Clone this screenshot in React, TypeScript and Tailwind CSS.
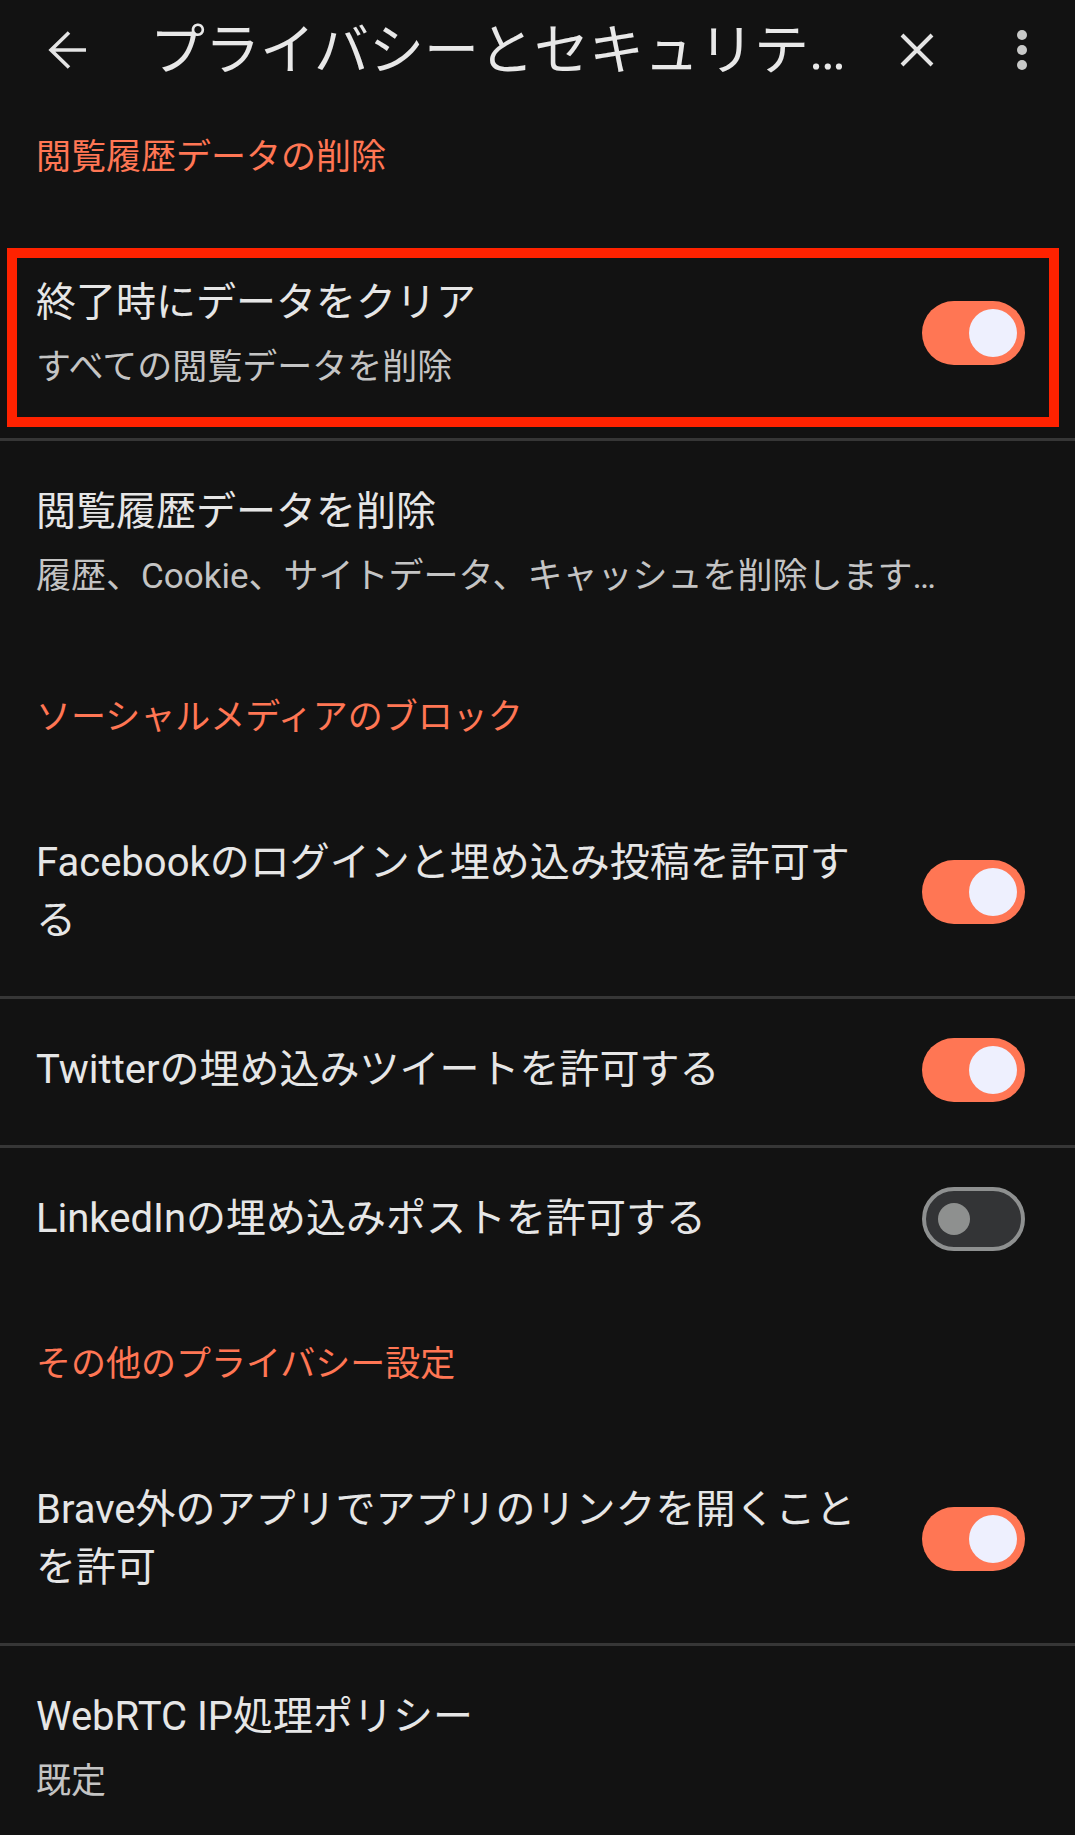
import React from "react";

const font = { fontFamily: "Roboto, 'Noto Sans CJK JP', sans-serif" };

// toggles are 64px tall but must not stretch a single-line row (text line is 58px)
const Toggle = ({ on }: { on: boolean }) =>
  on ? (
    <div className="-my-[3px] flex h-[64px] w-[103px] shrink-0 items-center justify-end rounded-full bg-[#ff7654] pr-[8px]">
      <div className="h-[48px] w-[48px] rounded-full bg-[#eef0fe]" />
    </div>
  ) : (
    <div className="-my-[3px] flex h-[64px] w-[103px] shrink-0 items-center rounded-full border-[4px] border-[#8e9090] bg-[#333436] pl-[12px]">
      <div className="h-[32px] w-[32px] rounded-full bg-[#8e908f]" />
    </div>
  );

const Divider = () => <div className="h-[3px] bg-[#363636]" />;

const Category = ({ title, first }: { title: string; first?: boolean }) => (
  <div
    className={`${first ? "pt-[33px]" : "pt-[46px]"} pb-[49px] pl-[36px] text-[35px] leading-[50px] text-[#ff7654]`}
  >
    {title}
  </div>
);

const Row = ({
  title,
  subtitle,
  toggle,
  highlight,
}: {
  title: string;
  subtitle?: string;
  toggle?: boolean;
  highlight?: boolean;
}) => (
  <div className="relative flex items-center gap-[40px] pt-[42px] pb-[46px] pl-[36px] pr-[50px]">
    <div className="min-w-0 flex-1">
      <div className="text-[40px] leading-[58px] text-[#e6e6e6]">{title}</div>
      {subtitle && (
        <div className="mt-[12px] overflow-hidden whitespace-nowrap text-[35px] leading-[48px] text-[#c4c4c4]">
          {subtitle}
        </div>
      )}
    </div>
    {toggle !== undefined && <Toggle on={toggle} />}
    {highlight && (
      <div className="pointer-events-none absolute top-[16px] right-[16px] bottom-[11px] left-[7px] border-[10px] border-[#ff2200]" />
    )}
  </div>
);

export default function App() {
  return (
    <div className="min-h-screen bg-[#121212]" style={font}>
      {/* toolbar */}
      <div className="flex h-[100px] items-center pl-[47px] pr-[48px]">
        <svg width="40" height="40" viewBox="0 0 40 40" className="shrink-0">
          <path d="M39 20H4M22 2.5L4 20l18 17.5" fill="none" stroke="#e4e4e4" strokeWidth="3.6" />
        </svg>
        <div className="ml-[63px] min-w-0 flex-1 overflow-hidden whitespace-nowrap text-[55px] leading-[70px] text-[#e8e8e8]">
          プライバシーとセキュリテ…
        </div>
        <svg width="34" height="34" viewBox="0 0 34 34" className="shrink-0">
          <path d="M2 2l30 30M32 2L2 32" fill="none" stroke="#e4e4e4" strokeWidth="4" />
        </svg>
        <svg width="10" height="40" viewBox="0 0 10 40" className="ml-[83px] shrink-0">
          <circle cx="5" cy="5" r="5" fill="#c8c9c8" />
          <circle cx="5" cy="20" r="5" fill="#c8c9c8" />
          <circle cx="5" cy="35" r="5" fill="#c8c9c8" />
        </svg>
      </div>

      <Category title="閲覧履歴データの削除" first />
      <Row title="終了時にデータをクリア" subtitle="すべての閲覧データを削除" toggle highlight />
      <Divider />
      <Row
        title="閲覧履歴データを削除"
        subtitle="履歴、Cookie、サイトデータ、キャッシュを削除します…"
      />

      <Category title="ソーシャルメディアのブロック" />
      <Row title="Facebookのログインと埋め込み投稿を許可する" toggle />
      <Divider />
      <Row title="Twitterの埋め込みツイートを許可する" toggle />
      <Divider />
      <Row title="LinkedInの埋め込みポストを許可する" toggle={false} />

      <Category title="その他のプライバシー設定" />
      <Row title="Brave外のアプリでアプリのリンクを開くことを許可" toggle />
      <Divider />
      <Row title="WebRTC IP処理ポリシー" subtitle="既定" />
    </div>
  );
}
